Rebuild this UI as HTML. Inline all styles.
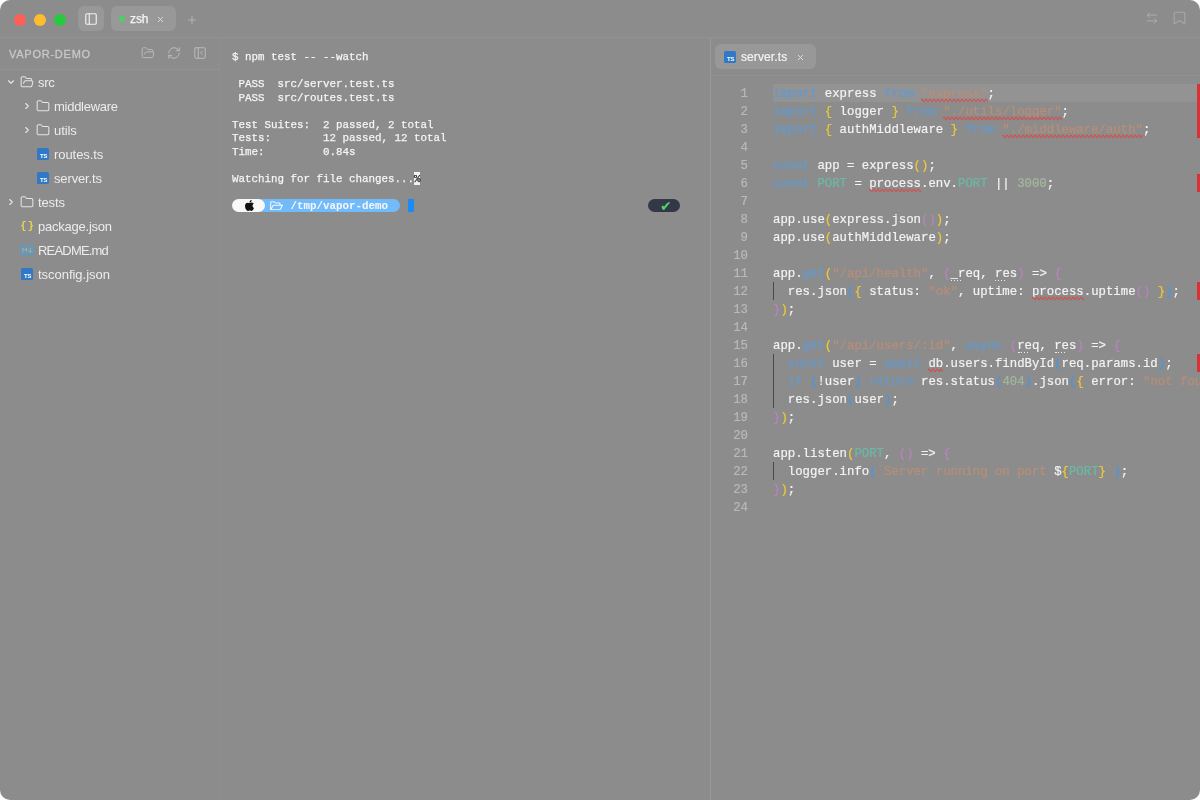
<!DOCTYPE html>
<html lang="en">
<head>
<meta charset="utf-8">
<title>vapor-demo</title>
<style>
*{box-sizing:border-box;margin:0;padding:0}
html,body{width:1200px;height:800px;background:#fff;overflow:hidden}
body{font-family:"Liberation Sans",sans-serif;color:#f2f2f2}
#win{will-change:transform;position:absolute;left:0;top:0;width:1200px;height:800px;background:#8c8c8c;border-radius:10px;overflow:hidden}
#titlebar{position:absolute;left:0;top:0;width:1200px;height:38px;border-bottom:1px solid #929292}
.tl{position:absolute;top:14px;width:12px;height:12px;border-radius:50%}
#sbtoggle{position:absolute;left:78px;top:6px;width:26px;height:25px;border-radius:6px;background:#989898}
#ttab{position:absolute;left:111px;top:6px;width:65px;height:25px;border-radius:6px;background:#989898}
#ttab .dot{position:absolute;left:8px;top:9.7px;width:6px;height:6px;border-radius:50%;background:#4ccf63}
#ttab .lbl{position:absolute;left:19px;top:6px;font-size:12px;line-height:15px;color:#f4f4f4;-webkit-text-stroke:0.25px #f4f4f4;letter-spacing:-0.1px}
.ico{position:absolute;display:block}
#sidebar{position:absolute;left:0;top:38px;width:220px;height:762px;border-right:1px solid #909090}
#sbhead{position:absolute;left:0;top:0;width:219px;height:32px;border-bottom:1px solid #929292}
#sbhead .ttl{position:absolute;left:9px;top:9px;font-size:11px;line-height:14px;letter-spacing:0.75px;color:#c8c8c8;-webkit-text-stroke:0.3px #c8c8c8}
.row{position:absolute;left:0;width:219px;height:24px;font-size:13px;line-height:24px;color:#ececec;letter-spacing:-0.2px;white-space:nowrap}
.row .t{position:absolute;top:1px}
#term{position:absolute;left:220px;top:38px;width:490px;height:762px;font-family:"Liberation Mono",monospace;font-size:10.83px;line-height:13.5px;color:#f5f5f5}
#term pre{position:absolute;left:12px;top:12px;font:inherit;white-space:pre;-webkit-text-stroke:0.25px #f5f5f5}
#term pre .l{position:relative;top:1.3px}
#term .inv{-webkit-text-stroke:0.25px #222;background:#f2f2f2;color:#222;display:inline-block;height:13.5px;vertical-align:top}
#prompt{position:absolute;left:12px;top:160.5px;height:13.5px;width:449px}
#prompt .seg{position:absolute;top:0;height:13.5px}
#prompt .chk{position:absolute;left:427.4px;top:1.3px;width:13px;text-align:center;font-family:"DejaVu Sans",sans-serif;font-size:14px;line-height:13.5px;color:#52d46c}
#prompt .txt{position:absolute;top:1.3px;font-weight:700;color:#f4f8fc;white-space:pre}
#editor{position:absolute;left:710px;top:38px;width:490px;height:762px;border-left:1px solid #9a9a9a}
#etabs{position:absolute;left:0;top:0;width:489px;height:38px;border-bottom:1px solid #919191}
#etab{position:absolute;left:4px;top:6px;width:101px;height:25px;border-radius:6px;background:#989898}
#etab .lbl{position:absolute;left:26px;top:6px;font-size:12px;line-height:15px;color:#f4f4f4;letter-spacing:0.1px;-webkit-text-stroke:0.2px #f4f4f4}
#code{position:absolute;left:0;top:46px;width:489px;height:716px;font-family:"Liberation Mono",monospace;font-size:12.33px;line-height:18px;white-space:pre;color:#f3f3f3;-webkit-text-stroke-width:0.2px}
#hl{position:absolute;left:62px;top:0;width:427px;height:18px;background:#939393}
.ln{position:absolute;left:0;width:37px;text-align:right;color:#b9b9b9;height:18px;margin-top:1px}
.cl{position:absolute;left:62px;height:18px;margin-top:1px}
.k{color:#629ad0}.s{color:#b98e77}.n{color:#a4b89e}.c{color:#69baa7}.f{color:#629ad0}
.b1{color:#ecc93a}.b2{color:#ba82be}.b3{color:#4797e4}
.sq{text-decoration:underline wavy #e0453d;text-decoration-thickness:1px;text-underline-offset:2.5px;text-decoration-skip-ink:none}
.dots{position:relative}
.dots::after{content:'';position:absolute;left:0.4px;top:12.7px;width:10.2px;height:1.6px;background:repeating-linear-gradient(90deg,#ececec 0 1.5px,transparent 1.5px 2.88px)}
.guide{position:absolute;left:62px;width:1px;background:#494949}
.mark{position:absolute;right:0;width:3px;background:#d73237}
</style>
</head>
<body>
<div id="win">
  <div id="titlebar">
    <div class="tl" style="left:14px;background:#fe5f57"></div>
    <div class="tl" style="left:34px;background:#febc2e"></div>
    <div class="tl" style="left:54px;background:#28c840"></div>
    <div id="sbtoggle"></div>
    <div id="ttab"><span class="dot"></span><span class="lbl">zsh</span></div>
    <svg class="ico" style="left:84px;top:11.5px" width="14" height="14" viewBox="0 0 24 24" fill="none" stroke="#f0f0f0" stroke-width="2" stroke-linecap="round" stroke-linejoin="round"><rect width="18" height="18" x="3" y="3" rx="2"/><path d="M9 3v18"/></svg>
    <svg class="ico" style="left:155.5px;top:15.2px" width="9" height="9" viewBox="0 0 24 24" fill="none" stroke="#dedede" stroke-width="2.5" stroke-linecap="round" stroke-linejoin="round"><path d="M18 6 6 18"/><path d="m6 6 12 12"/></svg>
    <svg class="ico" style="left:186px;top:14px" width="12" height="12" viewBox="0 0 24 24" fill="none" stroke="#b4b4b4" stroke-width="2" stroke-linecap="round" stroke-linejoin="round"><path d="M5 12h14"/><path d="M12 5v14"/></svg>
    <svg class="ico" style="left:1145px;top:11px" width="14" height="14" viewBox="0 0 24 24" fill="none" stroke="#b6b6b6" stroke-width="1.35" stroke-linecap="round" stroke-linejoin="round"><path d="M8 3 4 7l4 4"/><path d="M4 7h16"/><path d="m16 21 4-4-4-4"/><path d="M20 17H4"/></svg>
    <svg class="ico" style="left:1173.4px;top:11.4px" width="13" height="14" viewBox="0 0 13 14" fill="none" stroke="#a6a6a6" stroke-width="1.15" stroke-linejoin="round"><path d="M1.2 12.9V2.7a1.5 1.5 0 0 1 1.5-1.5h7.6a1.5 1.5 0 0 1 1.5 1.5v10.2l-5.3-3.3z"/></svg>
  </div>
  <div id="sidebar">
    <div id="sbhead"><span class="ttl">VAPOR-DEMO</span><svg class="ico" style="left:141px;top:8.2px" width="14" height="14" viewBox="0 0 24 24" fill="none" stroke="#bcbcbc" stroke-width="1.65" stroke-linecap="round" stroke-linejoin="round"><path d="m6 14 1.5-2.9A2 2 0 0 1 9.24 10H20a2 2 0 0 1 1.94 2.5l-1.54 6a2 2 0 0 1-1.95 1.5H4a2 2 0 0 1-2-2V5a2 2 0 0 1 2-2h3.9a2 2 0 0 1 1.69.9l.81 1.2a2 2 0 0 0 1.67.9H18a2 2 0 0 1 2 2v2"/></svg><svg class="ico" style="left:167px;top:8.2px" width="14" height="14" viewBox="0 0 24 24" fill="none" stroke="#bcbcbc" stroke-width="1.65" stroke-linecap="round" stroke-linejoin="round"><path d="M3 12a9 9 0 0 1 9-9 9.75 9.75 0 0 1 6.74 2.74L21 8"/><path d="M21 3v5h-5"/><path d="M21 12a9 9 0 0 1-9 9 9.75 9.75 0 0 1-6.74-2.74L3 16"/><path d="M8 16H3v5"/></svg><svg class="ico" style="left:193px;top:8.2px" width="14" height="14" viewBox="0 0 24 24" fill="none" stroke="#bcbcbc" stroke-width="1.65" stroke-linecap="round" stroke-linejoin="round"><rect width="18" height="18" x="3" y="3" rx="2"/><path d="M9 3v18"/><path d="m16 15-3-3 3-3"/></svg></div>
    <div class="row" style="top:32px"><svg class="ico" style="left:6px;top:7px" width="10" height="10" viewBox="0 0 24 24" fill="none" stroke="#e4e4e4" stroke-width="2.8" stroke-linecap="round" stroke-linejoin="round"><path d="m6 9 6 6 6-6"/></svg><svg class="ico" style="left:20px;top:5px" width="14" height="14" viewBox="0 0 24 24" fill="none" stroke="#e4e4e4" stroke-width="1.8" stroke-linecap="round" stroke-linejoin="round"><path d="m6 14 1.5-2.9A2 2 0 0 1 9.24 10H20a2 2 0 0 1 1.94 2.5l-1.54 6a2 2 0 0 1-1.95 1.5H4a2 2 0 0 1-2-2V5a2 2 0 0 1 2-2h3.9a2 2 0 0 1 1.69.9l.81 1.2a2 2 0 0 0 1.67.9H18a2 2 0 0 1 2 2v2"/></svg><span class="t" style="left:38px;letter-spacing:-0.24px">src</span></div>
    <div class="row" style="top:56px"><svg class="ico" style="left:22px;top:7px" width="10" height="10" viewBox="0 0 24 24" fill="none" stroke="#e4e4e4" stroke-width="2.8" stroke-linecap="round" stroke-linejoin="round"><path d="m9 18 6-6-6-6"/></svg><svg class="ico" style="left:36px;top:5px" width="14" height="14" viewBox="0 0 24 24" fill="none" stroke="#e4e4e4" stroke-width="1.8" stroke-linecap="round" stroke-linejoin="round"><path d="M20 20a2 2 0 0 0 2-2V8a2 2 0 0 0-2-2h-7.9a2 2 0 0 1-1.69-.9L9.6 3.9A2 2 0 0 0 7.93 3H4a2 2 0 0 0-2 2v13a2 2 0 0 0 2 2Z"/></svg><span class="t" style="left:54px;letter-spacing:-0.27px">middleware</span></div>
    <div class="row" style="top:80px"><svg class="ico" style="left:22px;top:7px" width="10" height="10" viewBox="0 0 24 24" fill="none" stroke="#e4e4e4" stroke-width="2.8" stroke-linecap="round" stroke-linejoin="round"><path d="m9 18 6-6-6-6"/></svg><svg class="ico" style="left:36px;top:5px" width="14" height="14" viewBox="0 0 24 24" fill="none" stroke="#e4e4e4" stroke-width="1.8" stroke-linecap="round" stroke-linejoin="round"><path d="M20 20a2 2 0 0 0 2-2V8a2 2 0 0 0-2-2h-7.9a2 2 0 0 1-1.69-.9L9.6 3.9A2 2 0 0 0 7.93 3H4a2 2 0 0 0-2 2v13a2 2 0 0 0 2 2Z"/></svg><span class="t" style="left:54px;letter-spacing:-0.1px">utils</span></div>
    <div class="row" style="top:104px"><svg class="ico" style="left:37px;top:6px" width="12" height="12" viewBox="0 0 12 12"><rect width="12" height="12" rx="1.6" fill="#3178c6"/><text x="3" y="9.7" font-family="Liberation Sans, sans-serif" font-weight="700" font-size="6" fill="#fff" letter-spacing="-0.25">TS</text></svg><span class="t" style="left:54px;letter-spacing:-0.06px">routes.ts</span></div>
    <div class="row" style="top:128px"><svg class="ico" style="left:37px;top:6px" width="12" height="12" viewBox="0 0 12 12"><rect width="12" height="12" rx="1.6" fill="#3178c6"/><text x="3" y="9.7" font-family="Liberation Sans, sans-serif" font-weight="700" font-size="6" fill="#fff" letter-spacing="-0.25">TS</text></svg><span class="t" style="left:54px;letter-spacing:-0.14px">server.ts</span></div>
    <div class="row" style="top:152px"><svg class="ico" style="left:6px;top:7px" width="10" height="10" viewBox="0 0 24 24" fill="none" stroke="#e4e4e4" stroke-width="2.8" stroke-linecap="round" stroke-linejoin="round"><path d="m9 18 6-6-6-6"/></svg><svg class="ico" style="left:20px;top:5px" width="14" height="14" viewBox="0 0 24 24" fill="none" stroke="#e4e4e4" stroke-width="1.8" stroke-linecap="round" stroke-linejoin="round"><path d="M20 20a2 2 0 0 0 2-2V8a2 2 0 0 0-2-2h-7.9a2 2 0 0 1-1.69-.9L9.6 3.9A2 2 0 0 0 7.93 3H4a2 2 0 0 0-2 2v13a2 2 0 0 0 2 2Z"/></svg><span class="t" style="left:38px;letter-spacing:-0.13px">tests</span></div>
    <div class="row" style="top:176px"><svg class="ico" style="left:19.4px;top:5px" width="14" height="14" viewBox="0 0 14 14"><text x="7" y="9.6" text-anchor="middle" font-family="Liberation Mono, monospace" font-weight="700" font-size="10.2" fill="#ead64f" letter-spacing="-2.4">{ }</text></svg><span class="t" style="left:38px;letter-spacing:-0.23px">package.json</span></div>
    <div class="row" style="top:200px"><svg class="ico" style="left:20px;top:6.9px" width="14" height="11" viewBox="0 0 14 11" fill="none" stroke="#559fc6" stroke-width="1"><rect x="0.5" y="0.5" width="13" height="9.6" rx="1.3" fill="#5a9fc4" fill-opacity="0.4"/><path d="M2.8 7.4V3.2l1.9 2.2 1.9-2.2v4.2M10.2 3.2v4M8.6 5.8l1.6 1.7 1.6-1.7" stroke="#a4cbe0" stroke-width="0.9" stroke-dasharray="1 0.8"/></svg><span class="t" style="left:38px;letter-spacing:-0.81px">README.md</span></div>
    <div class="row" style="top:224px"><svg class="ico" style="left:21px;top:6px" width="12" height="12" viewBox="0 0 12 12"><rect width="12" height="12" rx="1.6" fill="#3178c6"/><text x="3" y="9.7" font-family="Liberation Sans, sans-serif" font-weight="700" font-size="6" fill="#fff" letter-spacing="-0.25">TS</text></svg><span class="t" style="left:38px;letter-spacing:-0.03px">tsconfig.json</span></div>
  </div>
  <div id="term"><pre><span class="l">$ npm test -- --watch

 PASS  src/server.test.ts
 PASS  src/routes.test.ts

Test Suites:  2 passed, 2 total
Tests:        12 passed, 12 total
Time:         0.84s

Watching for file changes...</span><span class="inv"><span class="l">%</span></span></pre>
    <div id="prompt"><span class="seg" style="left:0;width:32.5px;background:#f8f8f8;border-radius:6.75px;z-index:2"></span><span class="seg" style="left:19.5px;width:148.5px;background:#72bbfb;border-radius:0 6.75px 6.75px 0;z-index:1"></span><svg class="ico" style="z-index:3;left:12.5px;top:1.2px" width="9" height="11" viewBox="0 0 814 1000"><path fill="#111" d="M788 341c-6 5-108 62-108 190 0 148 130 200 134 201-1 3-21 72-69 142-43 62-88 124-156 124s-86-40-165-40c-77 0-104 41-167 41s-106-57-156-127C43 788 0 660 0 539c0-195 127-298 251-298 66 0 121 43 163 43 39 0 101-46 176-46 28 0 130 3 198 103zM554 159c31-37 53-88 53-139 0-7-1-14-2-20-50 2-110 34-146 76-28 32-55 83-55 135 0 8 1 16 2 18 3 1 8 1 14 1 45 0 102-30 134-71z"/></svg><svg class="ico" style="left:38.4px;top:2.4px;z-index:3" width="13.2" height="9.4" viewBox="0 0 13.2 9.4" fill="none" stroke="#f4f8fc" stroke-width="1.05" stroke-linejoin="round" stroke-linecap="round"><path d="M0.7 8.2V1.6a0.9 0.9 0 0 1 .9-.9h2.5l1.2 1.3h3.9a0.9 0.9 0 0 1 .9.9v1"/><path d="M0.8 8.7 3.2 4.2h9.3L10 8.7z"/></svg><span class="txt" style="left:58.5px;z-index:3">/tmp/vapor-demo</span><span class="seg" style="left:175.5px;width:6.5px;background:#1a8cf5"></span><span class="seg" style="left:416.0px;width:32.0px;background:#333846;border-radius:6.75px"></span><span class="chk">✔</span></div>
  </div>
  <div id="editor">
    <div id="etabs"><div id="etab"><svg class="ico" style="left:9px;top:6.5px" width="12" height="12" viewBox="0 0 12 12"><rect width="12" height="12" rx="1.6" fill="#3178c6"/><text x="3" y="9.7" font-family="Liberation Sans, sans-serif" font-weight="700" font-size="6" fill="#fff" letter-spacing="-0.25">TS</text></svg><span class="lbl">server.ts</span><svg class="ico" style="left:80.5px;top:8.5px" width="9" height="9" viewBox="0 0 24 24" fill="none" stroke="#dedede" stroke-width="2.5" stroke-linecap="round" stroke-linejoin="round"><path d="M18 6 6 18"/><path d="m6 6 12 12"/></svg></div></div>
    <div id="code"><div id="hl"></div>
<div class="ln" style="top:0px">1</div><div class="cl" style="top:0px"><span class="k">import</span> express <span class="k">from</span> <span class="s">"express"</span>;</div>
<div class="ln" style="top:18px">2</div><div class="cl" style="top:18px"><span class="k">import</span> <span class="b1">{</span> logger <span class="b1">}</span> <span class="k">from</span> <span class="s">"./utils/logger"</span>;</div>
<div class="ln" style="top:36px">3</div><div class="cl" style="top:36px"><span class="k">import</span> <span class="b1">{</span> authMiddleware <span class="b1">}</span> <span class="k">from</span> <span class="s">"./middleware/auth"</span>;</div>
<div class="ln" style="top:54px">4</div><div class="cl" style="top:54px"></div>
<div class="ln" style="top:72px">5</div><div class="cl" style="top:72px"><span class="k">const</span> app = express<span class="b1">()</span>;</div>
<div class="ln" style="top:90px">6</div><div class="cl" style="top:90px"><span class="k">const</span> <span class="c">PORT</span> = process.env.<span class="c">PORT</span> || <span class="n">3000</span>;</div>
<div class="ln" style="top:108px">7</div><div class="cl" style="top:108px"></div>
<div class="ln" style="top:126px">8</div><div class="cl" style="top:126px">app.use<span class="b1">(</span>express.json<span class="b2">()</span><span class="b1">)</span>;</div>
<div class="ln" style="top:144px">9</div><div class="cl" style="top:144px">app.use<span class="b1">(</span>authMiddleware<span class="b1">)</span>;</div>
<div class="ln" style="top:162px">10</div><div class="cl" style="top:162px"></div>
<div class="ln" style="top:180px">11</div><div class="cl" style="top:180px">app.<span class="f">get</span><span class="b1">(</span><span class="s">"/api/health"</span>, <span class="b2">(</span><span class="dots">_</span>req, <span class="dots">res</span><span class="b2">)</span> =&gt; <span class="b2">{</span></div>
<div class="ln" style="top:198px">12</div><div class="cl" style="top:198px">  res.json<span class="b3">(</span><span class="b1">{</span> status: <span class="s">"ok"</span>, uptime: process.uptime<span class="b2">()</span> <span class="b1">}</span><span class="b3">)</span>;</div>
<div class="ln" style="top:216px">13</div><div class="cl" style="top:216px"><span class="b2">}</span><span class="b1">)</span>;</div>
<div class="ln" style="top:234px">14</div><div class="cl" style="top:234px"></div>
<div class="ln" style="top:252px">15</div><div class="cl" style="top:252px">app.<span class="f">get</span><span class="b1">(</span><span class="s">"/api/users/:id"</span>, <span class="k">async</span> <span class="b2">(</span><span class="dots">req</span>, <span class="dots">res</span><span class="b2">)</span> =&gt; <span class="b2">{</span></div>
<div class="ln" style="top:270px">16</div><div class="cl" style="top:270px">  <span class="k">const</span> user = <span class="k">await</span> db.users.findById<span class="b3">(</span>req.params.id<span class="b3">)</span>;</div>
<div class="ln" style="top:288px">17</div><div class="cl" style="top:288px">  <span class="k">if</span> <span class="b3">(</span>!user<span class="b3">)</span> <span class="k">return</span> res.status<span class="b3">(</span><span class="n">404</span><span class="b3">)</span>.json<span class="b3">(</span><span class="b1">{</span> error: <span class="s">"not found"</span> <span class="b1">}</span><span class="b3">)</span>;</div>
<div class="ln" style="top:306px">18</div><div class="cl" style="top:306px">  res.json<span class="b3">(</span>user<span class="b3">)</span>;</div>
<div class="ln" style="top:324px">19</div><div class="cl" style="top:324px"><span class="b2">}</span><span class="b1">)</span>;</div>
<div class="ln" style="top:342px">20</div><div class="cl" style="top:342px"></div>
<div class="ln" style="top:360px">21</div><div class="cl" style="top:360px">app.listen<span class="b1">(</span><span class="c">PORT</span>, <span class="b2">()</span> =&gt; <span class="b2">{</span></div>
<div class="ln" style="top:378px">22</div><div class="cl" style="top:378px">  logger.info<span class="b3">(</span><span class="s">`Server running on port </span>$<span class="b1">{</span><span class="c">PORT</span><span class="b1">}</span><span class="s">`</span><span class="b3">)</span>;</div>
<div class="ln" style="top:396px">23</div><div class="cl" style="top:396px"><span class="b2">}</span><span class="b1">)</span>;</div>
<div class="ln" style="top:414px">24</div><div class="cl" style="top:414px"></div>
<svg class="ico" style="left:210.0px;top:14px" width="66.6" height="4.8" viewBox="0 0 66.6 4.8"><path d="M0 2.4 Q1 -0.1 2 2.4 Q3 4.9 4 2.4 Q5 -0.1 6 2.4 Q7 4.9 8 2.4 Q9 -0.1 10 2.4 Q11 4.9 12 2.4 Q13 -0.1 14 2.4 Q15 4.9 16 2.4 Q17 -0.1 18 2.4 Q19 4.9 20 2.4 Q21 -0.1 22 2.4 Q23 4.9 24 2.4 Q25 -0.1 26 2.4 Q27 4.9 28 2.4 Q29 -0.1 30 2.4 Q31 4.9 32 2.4 Q33 -0.1 34 2.4 Q35 4.9 36 2.4 Q37 -0.1 38 2.4 Q39 4.9 40 2.4 Q41 -0.1 42 2.4 Q43 4.9 44 2.4 Q45 -0.1 46 2.4 Q47 4.9 48 2.4 Q49 -0.1 50 2.4 Q51 4.9 52 2.4 Q53 -0.1 54 2.4 Q55 4.9 56 2.4 Q57 -0.1 58 2.4 Q59 4.9 60 2.4 Q61 -0.1 62 2.4 Q63 4.9 64 2.4 Q65 -0.1 66 2.4 Q67 4.9 68 2.4" fill="none" stroke="#d4504e" stroke-width="1.2"/></svg>
<svg class="ico" style="left:232.2px;top:32px" width="118.4" height="4.8" viewBox="0 0 118.4 4.8"><path d="M0 2.4 Q1 -0.1 2 2.4 Q3 4.9 4 2.4 Q5 -0.1 6 2.4 Q7 4.9 8 2.4 Q9 -0.1 10 2.4 Q11 4.9 12 2.4 Q13 -0.1 14 2.4 Q15 4.9 16 2.4 Q17 -0.1 18 2.4 Q19 4.9 20 2.4 Q21 -0.1 22 2.4 Q23 4.9 24 2.4 Q25 -0.1 26 2.4 Q27 4.9 28 2.4 Q29 -0.1 30 2.4 Q31 4.9 32 2.4 Q33 -0.1 34 2.4 Q35 4.9 36 2.4 Q37 -0.1 38 2.4 Q39 4.9 40 2.4 Q41 -0.1 42 2.4 Q43 4.9 44 2.4 Q45 -0.1 46 2.4 Q47 4.9 48 2.4 Q49 -0.1 50 2.4 Q51 4.9 52 2.4 Q53 -0.1 54 2.4 Q55 4.9 56 2.4 Q57 -0.1 58 2.4 Q59 4.9 60 2.4 Q61 -0.1 62 2.4 Q63 4.9 64 2.4 Q65 -0.1 66 2.4 Q67 4.9 68 2.4 Q69 -0.1 70 2.4 Q71 4.9 72 2.4 Q73 -0.1 74 2.4 Q75 4.9 76 2.4 Q77 -0.1 78 2.4 Q79 4.9 80 2.4 Q81 -0.1 82 2.4 Q83 4.9 84 2.4 Q85 -0.1 86 2.4 Q87 4.9 88 2.4 Q89 -0.1 90 2.4 Q91 4.9 92 2.4 Q93 -0.1 94 2.4 Q95 4.9 96 2.4 Q97 -0.1 98 2.4 Q99 4.9 100 2.4 Q101 -0.1 102 2.4 Q103 4.9 104 2.4 Q105 -0.1 106 2.4 Q107 4.9 108 2.4 Q109 -0.1 110 2.4 Q111 4.9 112 2.4 Q113 -0.1 114 2.4 Q115 4.9 116 2.4 Q117 -0.1 118 2.4 Q119 4.9 120 2.4" fill="none" stroke="#d4504e" stroke-width="1.2"/></svg>
<svg class="ico" style="left:291.4px;top:50px" width="140.6" height="4.8" viewBox="0 0 140.6 4.8"><path d="M0 2.4 Q1 -0.1 2 2.4 Q3 4.9 4 2.4 Q5 -0.1 6 2.4 Q7 4.9 8 2.4 Q9 -0.1 10 2.4 Q11 4.9 12 2.4 Q13 -0.1 14 2.4 Q15 4.9 16 2.4 Q17 -0.1 18 2.4 Q19 4.9 20 2.4 Q21 -0.1 22 2.4 Q23 4.9 24 2.4 Q25 -0.1 26 2.4 Q27 4.9 28 2.4 Q29 -0.1 30 2.4 Q31 4.9 32 2.4 Q33 -0.1 34 2.4 Q35 4.9 36 2.4 Q37 -0.1 38 2.4 Q39 4.9 40 2.4 Q41 -0.1 42 2.4 Q43 4.9 44 2.4 Q45 -0.1 46 2.4 Q47 4.9 48 2.4 Q49 -0.1 50 2.4 Q51 4.9 52 2.4 Q53 -0.1 54 2.4 Q55 4.9 56 2.4 Q57 -0.1 58 2.4 Q59 4.9 60 2.4 Q61 -0.1 62 2.4 Q63 4.9 64 2.4 Q65 -0.1 66 2.4 Q67 4.9 68 2.4 Q69 -0.1 70 2.4 Q71 4.9 72 2.4 Q73 -0.1 74 2.4 Q75 4.9 76 2.4 Q77 -0.1 78 2.4 Q79 4.9 80 2.4 Q81 -0.1 82 2.4 Q83 4.9 84 2.4 Q85 -0.1 86 2.4 Q87 4.9 88 2.4 Q89 -0.1 90 2.4 Q91 4.9 92 2.4 Q93 -0.1 94 2.4 Q95 4.9 96 2.4 Q97 -0.1 98 2.4 Q99 4.9 100 2.4 Q101 -0.1 102 2.4 Q103 4.9 104 2.4 Q105 -0.1 106 2.4 Q107 4.9 108 2.4 Q109 -0.1 110 2.4 Q111 4.9 112 2.4 Q113 -0.1 114 2.4 Q115 4.9 116 2.4 Q117 -0.1 118 2.4 Q119 4.9 120 2.4 Q121 -0.1 122 2.4 Q123 4.9 124 2.4 Q125 -0.1 126 2.4 Q127 4.9 128 2.4 Q129 -0.1 130 2.4 Q131 4.9 132 2.4 Q133 -0.1 134 2.4 Q135 4.9 136 2.4 Q137 -0.1 138 2.4 Q139 4.9 140 2.4 Q141 -0.1 142 2.4" fill="none" stroke="#d4504e" stroke-width="1.2"/></svg>
<svg class="ico" style="left:158.2px;top:104px" width="51.8" height="4.8" viewBox="0 0 51.8 4.8"><path d="M0 2.4 Q1 -0.1 2 2.4 Q3 4.9 4 2.4 Q5 -0.1 6 2.4 Q7 4.9 8 2.4 Q9 -0.1 10 2.4 Q11 4.9 12 2.4 Q13 -0.1 14 2.4 Q15 4.9 16 2.4 Q17 -0.1 18 2.4 Q19 4.9 20 2.4 Q21 -0.1 22 2.4 Q23 4.9 24 2.4 Q25 -0.1 26 2.4 Q27 4.9 28 2.4 Q29 -0.1 30 2.4 Q31 4.9 32 2.4 Q33 -0.1 34 2.4 Q35 4.9 36 2.4 Q37 -0.1 38 2.4 Q39 4.9 40 2.4 Q41 -0.1 42 2.4 Q43 4.9 44 2.4 Q45 -0.1 46 2.4 Q47 4.9 48 2.4 Q49 -0.1 50 2.4 Q51 4.9 52 2.4" fill="none" stroke="#d4504e" stroke-width="1.2"/></svg>
<svg class="ico" style="left:321.0px;top:212px" width="51.8" height="4.8" viewBox="0 0 51.8 4.8"><path d="M0 2.4 Q1 -0.1 2 2.4 Q3 4.9 4 2.4 Q5 -0.1 6 2.4 Q7 4.9 8 2.4 Q9 -0.1 10 2.4 Q11 4.9 12 2.4 Q13 -0.1 14 2.4 Q15 4.9 16 2.4 Q17 -0.1 18 2.4 Q19 4.9 20 2.4 Q21 -0.1 22 2.4 Q23 4.9 24 2.4 Q25 -0.1 26 2.4 Q27 4.9 28 2.4 Q29 -0.1 30 2.4 Q31 4.9 32 2.4 Q33 -0.1 34 2.4 Q35 4.9 36 2.4 Q37 -0.1 38 2.4 Q39 4.9 40 2.4 Q41 -0.1 42 2.4 Q43 4.9 44 2.4 Q45 -0.1 46 2.4 Q47 4.9 48 2.4 Q49 -0.1 50 2.4 Q51 4.9 52 2.4" fill="none" stroke="#d4504e" stroke-width="1.2"/></svg>
<svg class="ico" style="left:217.4px;top:284px" width="14.8" height="4.8" viewBox="0 0 14.8 4.8"><path d="M0 2.4 Q1 -0.1 2 2.4 Q3 4.9 4 2.4 Q5 -0.1 6 2.4 Q7 4.9 8 2.4 Q9 -0.1 10 2.4 Q11 4.9 12 2.4 Q13 -0.1 14 2.4 Q15 4.9 16 2.4" fill="none" stroke="#d4504e" stroke-width="1.2"/></svg>
<div class="guide" style="top:198px;height:18px"></div>
<div class="guide" style="top:270px;height:54px"></div>
<div class="guide" style="top:378px;height:18px"></div>
<div class="mark" style="top:0;height:54px"></div>
<div class="mark" style="top:90px;height:18px"></div>
<div class="mark" style="top:198px;height:18px"></div>
<div class="mark" style="top:270px;height:18px"></div></div>
  </div>
</div>
</body>
</html>
